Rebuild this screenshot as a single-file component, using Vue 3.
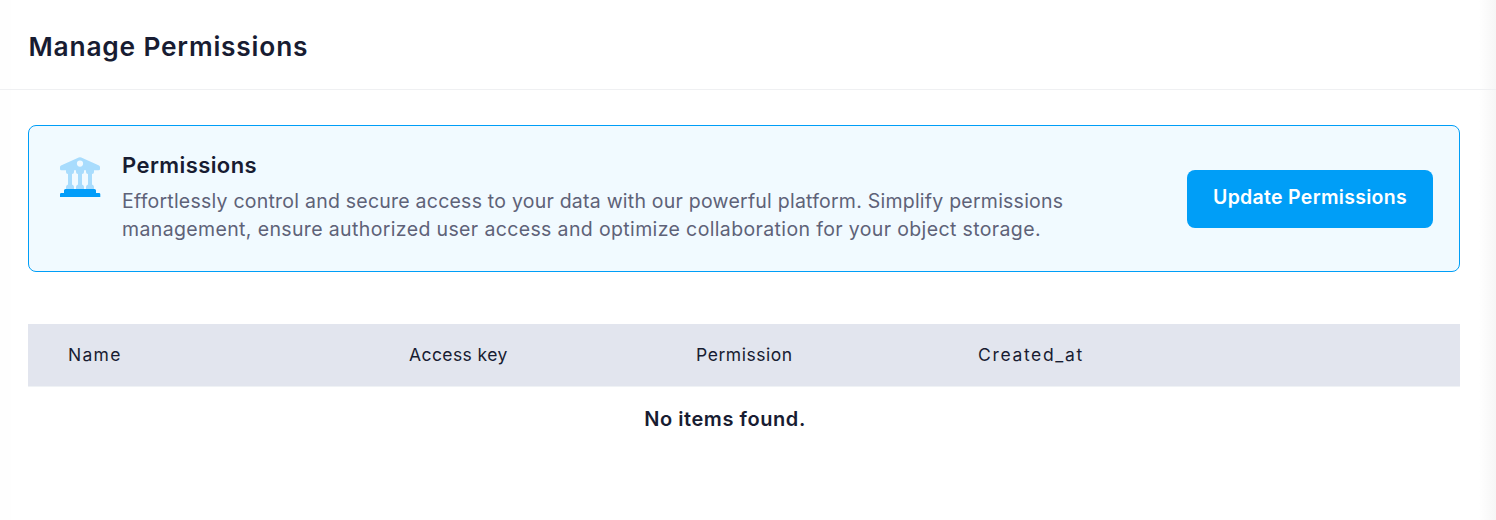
<script setup>
const columns = ['Name', 'Access key', 'Permission', 'Created_at']
const description = [
  'Effortlessly control and secure access to your data with our powerful platform. Simplify permissions',
  'management, ensure authorized user access and optimize collaboration for your object storage.',
]
</script>

<template>
  <main class="page">
    <header class="head"><h1>Manage Permissions</h1></header>
    <section class="notice">
      <svg class="bank" viewBox="0 0 40 40" width="40" height="40" aria-hidden="true">
        <path fill="#a8dcfd" fill-rule="evenodd" d="M18.7.5Q20 0 21.3.5L39 8.5Q40 9 40 10v2q0 1.300-1.300 1.300H1.300Q0 13.300 0 12v-2Q0 9 1 8.500ZM20 3.500a3.100 3.100 0 1 0 0 6.200a3.100 3.100 0 0 0 0-6.200Z" />
        <path v-for="x in [10, 20, 30]" :key="x" fill="#a8dcfd" :transform="`translate(${x} 0)`" d="M-4 13h8v2q0 2-2 2v10.500q2 .500 2 2.500v2h-8v-2q0-2 2-2.500V17q-2 0-2-2Z" />
        <path fill="#029df9" d="M4 33.500Q4 32 5.500 32h29Q36 32 36 33.500V36h3Q40.300 36 40.300 37.300V40H0v-2.700Q0 36 1.300 36H4Z" />
      </svg>
      <div class="copy">
        <h2>Permissions</h2>
        <p><span v-for="(line, i) in description" :key="i" :class="`line line-${i + 1}`">{{ line }}</span></p>
      </div>
      <button type="button"><span>Update Permissions</span></button>
    </section>
    <table>
      <thead>
        <tr><th v-for="(c, i) in columns" :key="c" :class="`col-${i + 1}`"><span>{{ c }}</span></th></tr>
      </thead>
      <tbody>
        <tr><td colspan="4"><span>No items found.</span></td></tr>
      </tbody>
    </table>
  </main>
</template>

<style>
body { margin: 0; background: #fff; }
</style>

<style scoped>
.page {
  box-sizing: border-box;
  height: 520px;
  overflow: hidden;
  font-family: Inter, "Open Sans", sans-serif;
  color: #181c32;
  background:
    linear-gradient(to right, transparent, #f6f6f6) right / 17px 100% no-repeat,
    linear-gradient(#fefefe, #fefefe) left / 11px 100% no-repeat,
    #fff;
}
.head {
  box-sizing: border-box;
  height: 90px;
  padding: 27px 28px 0 28.500px;
  border-bottom: 1px solid #eff0f2;
}
h1 { margin: 0; font-size: 26.300px; line-height: 39px; font-weight: 580; letter-spacing: 0.82px; }
.notice {
  box-sizing: border-box;
  display: flex;
  height: 147px;
  margin: 35px 36px 0 28px;
  padding: 0 26px 0 31px;
  border: 1px solid #009ef7;
  border-radius: 8px;
  background: #f1faff;
}
.bank { margin-top: 31px; flex: none; overflow: visible; }
.copy { flex: 1; padding: 22px 0 0 22px; white-space: nowrap; }
h2 { margin: 0; font-size: 22px; line-height: 35px; font-weight: 580; letter-spacing: 0.42px; }
p { margin: 4px 0 0; font-size: 19.500px; line-height: 28px; color: #5e6278; }
.line { display: block; }
.line-1 { letter-spacing: 0.23px; }
.line-2 { letter-spacing: 0.365px; }
button {
  width: 246px;
  height: 58px;
  margin-top: 44px;
  padding: 0 0 4px;
  border: 0;
  border-radius: 8px;
  background: #009ef7;
  color: #fff;
  font: 580 19.500px Inter, sans-serif;
  letter-spacing: 0.3px;
  white-space: nowrap;
}
table { width: 1432px; margin: 52px 0 0 28px; table-layout: fixed; border-collapse: separate; border-spacing: 0; }
th {
  box-sizing: border-box;
  height: 63px;
  padding: 0 0 1px;
  background: #e2e5ee;
  border-bottom: 1px solid #eff2f5;
  text-align: left;
  font-weight: 400;
  font-size: 17.500px;
}
.col-1 { width: 381px; padding-left: 40px; letter-spacing: 1.3px; }
.col-2 { width: 287px; letter-spacing: 0.42px; }
.col-3 { width: 282px; letter-spacing: 0.55px; }
.col-4 { letter-spacing: 1.65px; }
td { padding: 18px 38px 0 0; text-align: center; font-size: 20px; line-height: 28px; font-weight: 580; letter-spacing: 0.57px; }
</style>
